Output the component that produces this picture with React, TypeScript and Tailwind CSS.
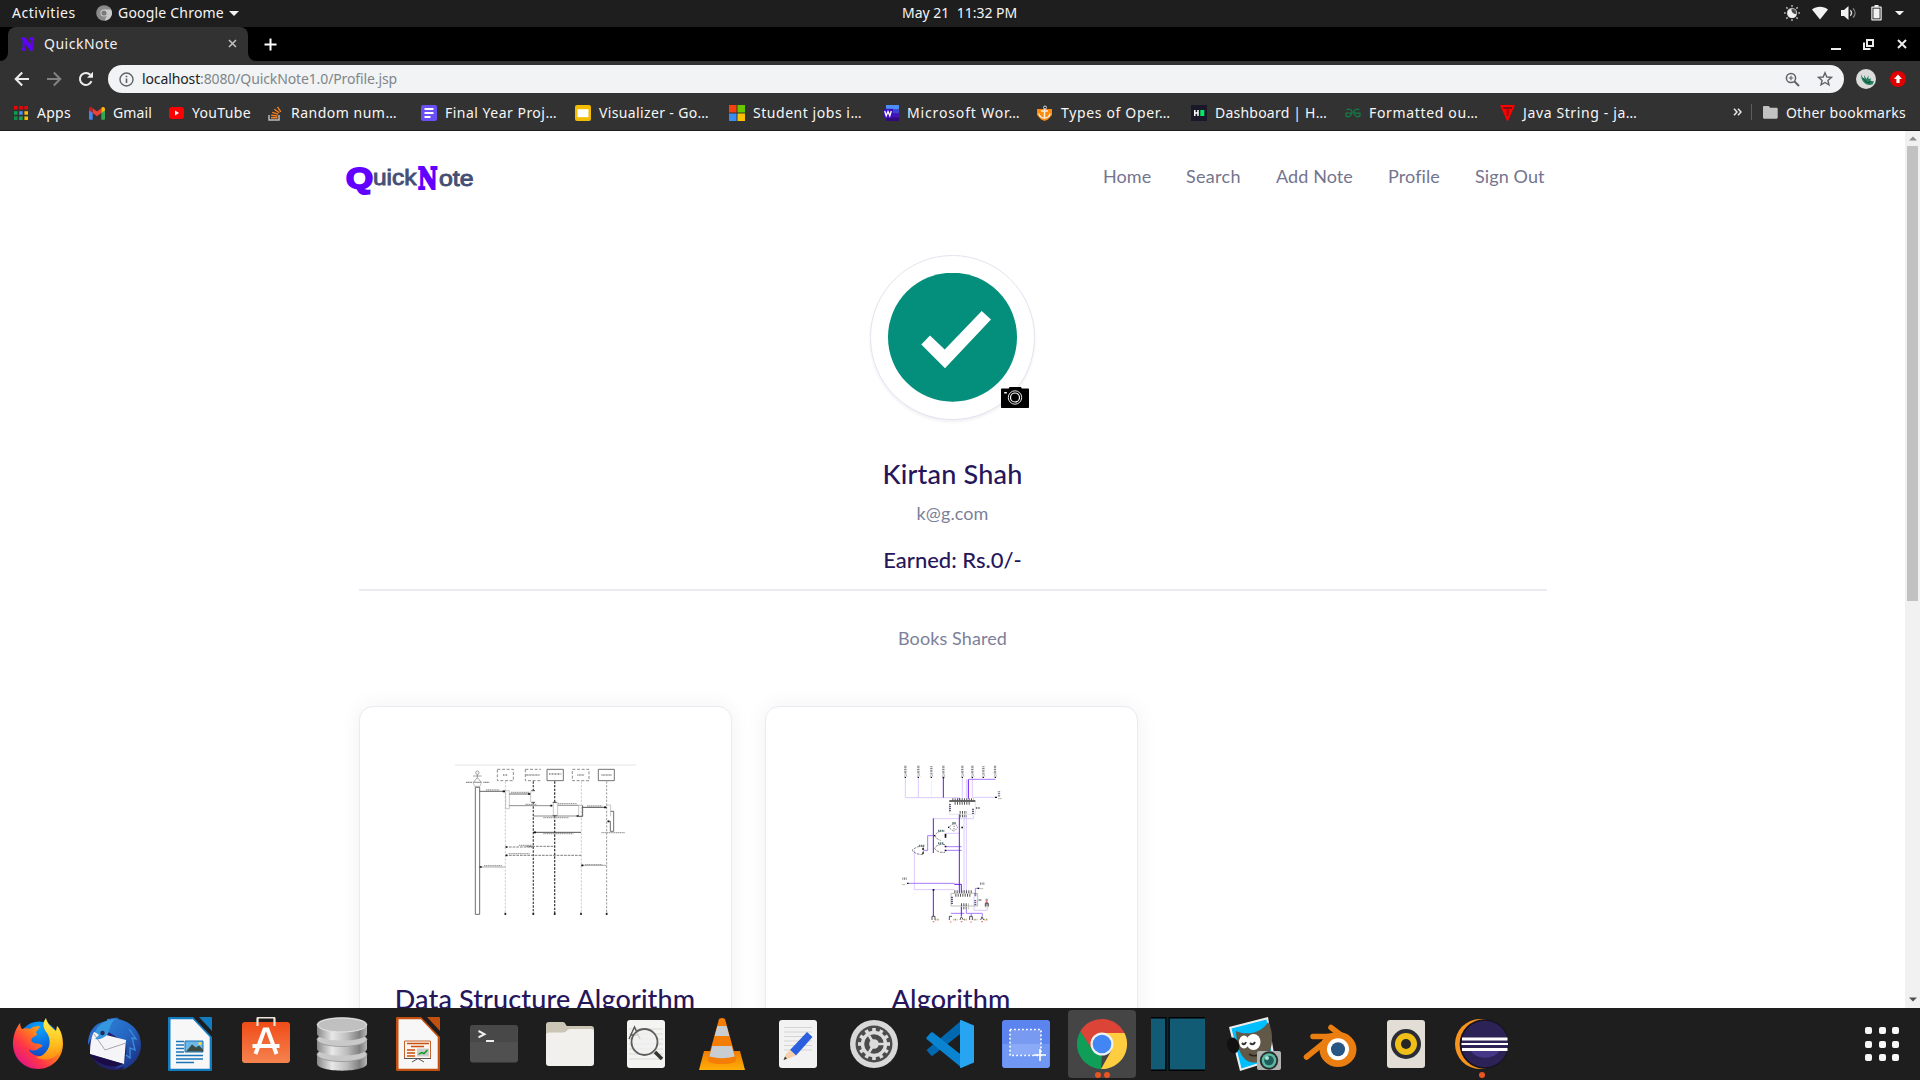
import React from 'react';

/* ---------- small icons ---------- */

const ChromeGrey = () => (
  <svg width="16" height="16" viewBox="0 0 16 16">
    <circle cx="8" cy="8" r="7.8" fill="#8b8b8b" />
    <path d="M8 .2A7.8 7.8 0 0 1 8.6 15.8L11.6 9 8 4.5h7A7.8 7.8 0 0 0 8 .2Z" fill="#c9c9c9" />
    <circle cx="8" cy="8" r="3.6" fill="#d0d0d0" />
    <circle cx="8" cy="8" r="2.6" fill="#7a7a7a" />
  </svg>
);

const Caret = ({ w = 10 }: { w?: number }) => (
  <svg width={w} height={w / 2} viewBox="0 0 10 5">
    <path d="M0 0h10L5 5z" fill="#f2f2f2" />
  </svg>
);

const NightLight = () => (
  <svg width="16" height="16" viewBox="0 0 16 16">
    <circle cx="8" cy="8" r="4.6" fill="#4a4a4a" stroke="#b0b0b0" strokeWidth="1.2" />
    <path d="M7.500 3.800a4.500 4.500 0 1 0 5 5.400A4.500 4.500 0 0 1 7.500 3.800Z" fill="#f2f2f2" />
    <g stroke="#b4b4b4" strokeWidth="1.600">
      <path d="M8 0v1.700M8 14.300V16M0 8h1.700M14.300 8H16M2.300 2.300l1.300 1.300M12.400 12.400l1.300 1.300M2.300 13.700l1.300-1.300M12.400 3.600l1.300-1.300" />
    </g>
  </svg>
);

const Wifi = () => (
  <svg width="16" height="14" viewBox="0 0 16 14">
    <path d="M0 3.6C4.5-.2 11.5-.2 16 3.6L8 13.5z" fill="#f2f2f2" />
  </svg>
);

const Volume = () => (
  <svg width="16" height="14" viewBox="0 0 16 14">
    <path d="M0 4h3l4.5-4v14L3 10H0z" fill="#f2f2f2" />
    <path d="M9.3 4.3c1.5 1.6 1.5 3.8 0 5.4" fill="none" stroke="#d8d8d8" strokeWidth="1.4" />
    <path d="M12 2.4c2.7 2.7 2.7 6.5 0 9.2" fill="none" stroke="#8a8a8a" strokeWidth="1.3" />
  </svg>
);

const Battery = () => (
  <svg width="11" height="16" viewBox="0 0 11 16">
    <path d="M3.5 0h4v1.5H10a.7.7 0 0 1 .7.7v12.6a.7.7 0 0 1-.7.7H1a.7.7 0 0 1-.7-.7V2.2a.7.7 0 0 1 .7-.7h2.5z" fill="#f2f2f2" />
    <path d="M1.5 2.7h8v11.6h-8z" fill="#1e1e1e" />
    <path d="M2.4 3.6h6.2v9.8H2.4z" fill="#f2f2f2" />
  </svg>
);

/* ---------- GNOME top bar ---------- */

const TopBar = () => (
  <div className="flex h-[27px] shrink-0 items-center bg-[#1e1e1e] pb-px text-[14px] leading-none text-[#f5f5f5]">
    <div className="flex w-[902px] items-center pl-3">
      <span className="w-[84px] tracking-[0.55px]">Activities</span>
      <ChromeGrey />
      <span className="ml-1.5 w-[111px] tracking-[0.2px]">Google Chrome</span>
      <Caret />
    </div>
    <span className="whitespace-pre">May 21  11:32 PM</span>
    <div className="ml-auto flex items-center pr-4">
      <NightLight />
      <span className="ml-3"><Wifi /></span>
      <span className="ml-[13px]"><Volume /></span>
      <span className="ml-[14px]"><Battery /></span>
      <span className="ml-[13px]"><Caret w={9} /></span>
    </div>
  </div>
);

/* ---------- Chrome window ---------- */

const TabStrip = () => (
  <div className="flex h-[34px] shrink-0 items-end bg-black text-[14px] text-[#f1f1f1]">
    <svg width="8" height="34" viewBox="0 0 8 34"><path d="M8 26v8H0a8 8 0 0 0 8-8Z" fill="#323232" /></svg>
    <div className="flex h-[34px] w-[240px] items-center rounded-t-[8px] bg-[#323232] pr-[11px] pb-px pl-[13px]">
      <svg width="14" height="14" viewBox="0 0 14 14">
        <text x="0.500" y="13" textLength="13" lengthAdjust="spacingAndGlyphs" fontSize="16" fill="#6200ff" stroke="#6200ff" strokeWidth="0.900" className='font-["DejaVu_Serif",serif] font-bold'>N</text>
      </svg>
      <span className="ml-[9px] tracking-[0.5px]">QuickNote</span>
      <svg className="ml-auto" width="9" height="9" viewBox="0 0 9 9"><path d="m1 1 7 7M8 1 1 8" stroke="#c4c4c4" strokeWidth="1.5" /></svg>
    </div>
    <svg width="8" height="34" viewBox="0 0 8 34"><path d="M0 26v8h8a8 8 0 0 1-8-8Z" fill="#323232" /></svg>
    <div className="flex h-[34px] flex-1 items-center pl-2">
      <svg width="13" height="13" viewBox="0 0 13 13"><path d="M6.500 .5v12M.5 6.500h12" stroke="#fff" strokeWidth="2" /></svg>
      <div className="ml-auto flex items-center pr-[13px]">
        <svg className="mt-1.5" width="10" height="10" viewBox="0 0 10 10"><path d="M0 7h10" stroke="#ececec" strokeWidth="2" /></svg>
        <svg className="ml-[22px]" width="11" height="11" viewBox="0 0 11 11">
          <path d="M4 1h6v6H4zM1 3.500V10h6.500" fill="none" stroke="#ececec" strokeWidth="2" />
        </svg>
        <svg className="ml-[23px]" width="10" height="10" viewBox="0 0 10 10"><path d="m1 1 8 8M9 1 1 9" stroke="#ececec" strokeWidth="2" /></svg>
      </div>
    </div>
  </div>
);

const AddressBar = () => (
  <div className="flex h-9 shrink-0 items-center bg-[#323232] pl-[14px] text-[14px]">
    <svg width="16" height="16" viewBox="0 0 16 16"><path d="M15 8H2M8.200 1.500 1.700 8l6.500 6.500" fill="none" stroke="#ededed" strokeWidth="2" /></svg>
    <svg className="ml-4" width="16" height="16" viewBox="0 0 16 16"><path d="M1 8h13M7.800 1.500 14.300 8l-6.500 6.500" fill="none" stroke="#828282" strokeWidth="2" /></svg>
    <svg className="ml-4" width="16" height="16" viewBox="0 0 16 16">
      <path d="M13.500 10.200A6 6 0 1 1 12.300 3.800" fill="none" stroke="#ededed" strokeWidth="2" />
      <path d="M15 .8v6H9z" fill="#ededed" />
    </svg>
    <div className="ml-[14px] flex h-7 w-[1736px] items-center rounded-full bg-[#f1f3f4] pr-[11px] pl-[11px]">
      <svg width="15" height="15" viewBox="0 0 15 15">
        <circle cx="7.500" cy="7.500" r="6.500" fill="none" stroke="#5f6368" strokeWidth="1.400" />
        <path d="M7.500 6.500V11M7.500 3.800v1.500" stroke="#5f6368" strokeWidth="1.600" />
      </svg>
      <span className="ml-2 pb-0.5 tracking-[-0.12px] text-[#80868b]"><span className="text-[#202124]">localhost</span>:8080/QuickNote1.0/Profile.jsp</span>
      <svg className="ml-auto" width="15" height="15" viewBox="0 0 15 15" fill="none" stroke="#5f6368">
        <circle cx="6" cy="6" r="4.600" strokeWidth="1.500" />
        <path d="m9.500 9.500 4.500 4.500" strokeWidth="1.900" />
        <path d="M6 3.800v4.400M3.800 6h4.400" strokeWidth="1.100" />
      </svg>
      <svg className="ml-[17px]" width="16" height="16" viewBox="0 0 16 16">
        <path d="m8 1.800 1.800 4.200 4.600.4-3.500 3 1.100 4.500L8 11.500l-4 2.400 1.100-4.500-3.500-3 4.600-.4z" fill="none" stroke="#5f6368" strokeWidth="1.400" />
      </svg>
    </div>
    <svg className="ml-3" width="20" height="20" viewBox="0 0 20 20">
      <circle cx="10" cy="10" r="10" fill="#dcdcdc" />
      <path d="M5 5c1 3 2 4 3.500 5L8 6l2.500 4 2-3.500V10l3-.5-1.500 2 4 1-1.500 3c-3 1-6 .5-8-1.500C6 12 5 9 5 5Z" fill="#27815f" />
      <path d="m7 9 3 4 4 1M12 14l3-2" stroke="#10523a" strokeWidth="1" fill="none" />
    </svg>
    <svg className="ml-[14px]" width="16" height="16" viewBox="0 0 16 16">
      <circle cx="8" cy="8" r="8" fill="#e00000" />
      <path d="M8 3.500 12 8H9.600v4H6.400V8H4z" fill="#fff" />
    </svg>
  </div>
);

const bookmarkIcons: Record<string, React.ReactNode> = {
  apps: (
    <svg width="14" height="14" viewBox="0 0 14 14">
      <path d="M0 0h3.500v3.500H0zM5.200 0h3.500v3.500H5.200zM10.400 0H14v3.500h-3.600z" fill="#f00000" />
      <path d="M0 5.200h3.500v3.500H0z" fill="#00a651" /><path d="M5.200 5.200h3.500v3.500H5.200z" fill="#4d8df6" /><path d="M10.400 5.200H14v3.500h-3.600z" fill="#fbbc05" />
      <path d="M0 10.400h3.500V14H0z" fill="#0a8f4a" /><path d="M5.200 10.400h3.500V14H5.200z" fill="#18a35b" /><path d="M10.400 10.400H14V14h-3.600z" fill="#fbbc05" />
    </svg>
  ),
  gmail: (
    <svg width="16" height="13" viewBox="0 0 16 13">
      <path d="M0 2v9.800c0 .6.500 1 1 1h2.700V5z" fill="#4285f4" />
      <path d="M16 2v9.800c0 .6-.5 1-1 1h-2.700V5z" fill="#34a853" />
      <path d="M12.300 1.500V6L16 3.200V2c0-1.700-1.900-2.500-3.200-1.500z" fill="#fbbc04" />
      <path d="M3.700 6V1.200L8 4.500l4.300-3.300V6L8 9.200z" fill="#ea4335" />
      <path d="M0 2v1.200L3.700 6V1.200L3.200.5C1.900-.5 0 .3 0 2z" fill="#c5221f" />
    </svg>
  ),
  youtube: (
    <svg width="16" height="12" viewBox="0 0 16 12"><rect width="15" height="12" rx="3" fill="#f00" /><path d="M6 3.500v5L10 6z" fill="#fff" /></svg>
  ),
  stack: (
    <svg width="15" height="16" viewBox="0 0 15 16" fill="none">
      <path d="M1 10v5h10v-5" stroke="#bcbbbb" strokeWidth="1.500" />
      <path d="M3 12.700h6.500M3.200 10.300l6.300.7M4.200 7.400l6 1.700M6.300 4.200l5 3.500M9.500 1.800l3.300 5" stroke="#f48024" strokeWidth="1.400" />
    </svg>
  ),
  doc: (
    <svg width="16" height="16" viewBox="0 0 16 16"><rect width="16" height="16" rx="2" fill="#6a4ff5" /><path d="M3.500 4h9M3.500 8h9M3.500 12h6" stroke="#fff" strokeWidth="1.800" /></svg>
  ),
  slides: (
    <svg width="16" height="16" viewBox="0 0 16 16"><rect width="16" height="16" rx="2" fill="#f2bd00" /><path d="M2.500 4.200h11v8h-11z" fill="#fff" /></svg>
  ),
  ms: (
    <svg width="16" height="16" viewBox="0 0 16 16"><path d="M0 0h7.500v7.500H0z" fill="#f8410c" /><path d="M8.500 0H16v7.500H8.500z" fill="#67c800" /><path d="M0 8.500h7.500V16H0z" fill="#3b8df0" /><path d="M8.500 8.500H16V16H8.500z" fill="#fcc200" /></svg>
  ),
  word: (
    <svg width="16" height="16" viewBox="0 0 16 16">
      <path d="M3 0h13v4.500H3z" fill="#4e8df5" /><path d="M3 4.500h13v4H3z" fill="#3f44d6" /><path d="M3 8.500h13v4H3z" fill="#4411bd" /><path d="M3 12.500h13V16H3z" fill="#310a80" />
      <path d="M0 3.800h10v9H0z" fill="#3b0fc0" /><path d="m1.700 6 1.500 4.800L5 6.500l1.800 4.300L8.300 6" fill="none" stroke="#fff" strokeWidth="1.300" />
    </svg>
  ),
  anchor: (
    <svg width="17" height="16" viewBox="0 0 17 16">
      <path d="M1 4h15v6l-4 4.500L8.500 16 5 14.500 1 10z" fill="#f98b0e" />
      <path d="M8.500 4v9M5 6h7M3 8.500c.5 3 3 4.500 5.500 4.500s5-1.500 5.500-4.500" fill="none" stroke="#f5eee4" strokeWidth="1.500" />
      <circle cx="9" cy="2.500" r="1.500" fill="none" stroke="#ddd" />
    </svg>
  ),
  hacker: (
    <svg width="16" height="16" viewBox="0 0 16 16"><path d="M0 0h16v16H0z" fill="#181828" /><path d="M3.800 5v6M7 5v6M3.800 8H7" stroke="#fff" strokeWidth="1.500" /><path d="M9.300 5h4v6h-4z" fill="#00ea64" /></svg>
  ),
  gfg: (
    <svg width="16" height="10" viewBox="0 0 16 10" fill="none" stroke="#157a45" strokeWidth="1.300">
      <path d="M1.500 1.800C5 0 7.500 2.500 7 5c-.5 3.500-4 4.800-6 2.800V5.200h6M14.500 1.800C11 0 8.500 2.500 9 5c.5 3.500 4 4.800 6 2.800V5.200H9" />
    </svg>
  ),
  java: (
    <svg width="16" height="16" viewBox="0 0 16 16"><path d="M1 0h15L9 16H8z" fill="#f00" /><path d="M4 3h9M8.600 3v8" stroke="#7a1010" strokeWidth="1.800" /></svg>
  ),
};

const bookmarks = [
  { icon: 'apps', label: 'Apps', box: 'w-[75px] gap-[9px] tracking-[0.28px]' },
  { icon: 'gmail', label: 'Gmail', box: 'w-[80px] gap-2 tracking-[0.13px]' },
  { icon: 'youtube', label: 'YouTube', box: 'w-[99px] gap-[7px] tracking-[0.34px]' },
  { icon: 'stack', label: 'Random num…', box: 'w-[153px] gap-2 tracking-[0.5px]' },
  { icon: 'doc', label: 'Final Year Proj…', box: 'w-[154px] gap-2 tracking-[0.49px]' },
  { icon: 'slides', label: 'Visualizer - Go…', box: 'w-[154px] gap-2 tracking-[0.36px]' },
  { icon: 'ms', label: 'Student jobs i…', box: 'w-[154px] gap-2 tracking-[0.54px]' },
  { icon: 'word', label: 'Microsoft Wor…', box: 'w-[153px] gap-2 tracking-[0.85px]' },
  { icon: 'anchor', label: 'Types of Oper…', box: 'w-[155px] gap-2 tracking-[0.66px]' },
  { icon: 'hacker', label: 'Dashboard | H…', box: 'w-[154px] gap-2 tracking-[0.22px]' },
  { icon: 'gfg', label: 'Formatted ou…', box: 'w-[154px] gap-2 tracking-[0.66px]' },
  { icon: 'java', label: 'Java String - ja…', box: 'w-[200px] gap-2 tracking-[0.62px]' },
];

const BookmarksBar = () => (
  <div className="flex h-[34px] shrink-0 items-start border-b border-[#1f1a20] bg-[#323232] pt-1 pr-[14px] pl-[14px] text-[14px] text-[#f6f6f6]">
    {bookmarks.map((b) => (
      <div key={b.label} className={`flex h-[22px] shrink-0 items-center whitespace-nowrap ${b.box}`}>
        <span className="pt-0.5">{bookmarkIcons[b.icon]}</span>
        <span>{b.label}</span>
      </div>
    ))}
    <div className="ml-auto flex h-[22px] items-center">
      <svg width="9" height="8" viewBox="0 0 9 8"><path d="m1 .8 3 3.200-3 3.200M5 .8l3 3.200-3 3.200" fill="none" stroke="#eee" strokeWidth="1.400" /></svg>
      <span className="ml-[9px] h-4 w-px bg-[#5c5c5c]" />
      <svg className="ml-[11px]" width="15" height="13" viewBox="0 0 15 13"><path d="M1.200 0h4.500l1.500 1.800h6.300c.7 0 1.200.5 1.200 1.200v8.500c0 .7-.5 1.200-1.200 1.200H1.200C.5 12.700 0 12.200 0 11.500V1.200C0 .5.5 0 1.200 0Z" fill="#c2c2c2" /></svg>
      <span className="ml-2 tracking-[0.28px]">Other bookmarks</span>
    </div>
  </div>
);

/* ---------- QuickNote page ---------- */

const Logo = () => (
  <svg width="132" height="38" viewBox="0 -2 132 38">
    <text x="1" y="28.500" textLength="27" lengthAdjust="spacingAndGlyphs" fontSize="30" fill="#6200ff" stroke="#6200ff" strokeWidth="2" className='font-["Liberation_Sans",sans-serif] font-bold'>Q</text>
    <g fill="#454f75" stroke="#454f75" strokeWidth="0.900" className='font-["Liberation_Sans",sans-serif]' fontSize="22">
      <text x="28" y="25.500" textLength="43.500" lengthAdjust="spacingAndGlyphs">uick</text>
      <text x="94" y="26.500" textLength="34.500" lengthAdjust="spacingAndGlyphs">ote</text>
    </g>
    <text x="73" y="29.500" textLength="19.500" lengthAdjust="spacingAndGlyphs" fontSize="30.500" fill="#6200ff" stroke="#6200ff" strokeWidth="2.200" className='font-["DejaVu_Serif",serif] font-bold'>N</text>
  </svg>
);

const nav = [
  { label: 'Home', cls: 'w-[83px]' },
  { label: 'Search', cls: 'w-[90px] tracking-[0.3px]' },
  { label: 'Add Note', cls: 'w-28' },
  { label: 'Profile', cls: 'w-[87px]' },
  { label: 'Sign Out', cls: '' },
];

const Avatar = () => (
  <div className="relative mt-[34px] flex h-[165px] w-[165px] shrink-0 items-center justify-center rounded-full border border-[#e4e4f0] bg-white shadow-[0_2px_3px_rgba(60,50,120,0.08)]">
    <svg width="130" height="130" viewBox="0 0 130 130">
      <circle cx="64.500" cy="64.200" r="64.500" fill="#038f7c" />
      <path d="m33.300 71.500 8.700-9 14.700 14 37-38.600 9.300 8.600-46 48.700z" fill="#fff" />
    </svg>
    <svg className="absolute top-[131px] left-[130px]" width="28" height="21" viewBox="0 0 28 21">
      <path d="M8.500 0h11.500l.8 1.500H27c.6 0 1 .4 1 1V20c0 .6-.4 1-1 1H1c-.6 0-1-.4-1-1V2.500c0-.6.4-1 1-1h6.700z" fill="#000" />
      <circle cx="14" cy="10.500" r="6.700" fill="none" stroke="#fff" strokeWidth="0.900" />
      <circle cx="14" cy="10.500" r="4.500" fill="none" stroke="#fff" strokeWidth="1.200" />
      <path d="M3.200 5h2.600v1.500H3.200z" fill="#fff" />
    </svg>
  </div>
);

const SequenceDiagram = () => (
  <svg width="220" height="185" viewBox="0 0 660 555" fill="none" stroke="#4a4a4a" strokeWidth="2.500">
    <path d="M45 45h543" stroke="#ececec" strokeWidth="5" />
    <g stroke="#666" strokeWidth="1.800">
      <circle cx="112" cy="68" r="5" /><path d="M112 73v10M99 78h26M112 83l-12 14h24z" />
      <path d="M78 97h18M130 97h18" strokeWidth="4" stroke="#888" strokeDasharray="4 1" /><path d="M99 97h26l-5 12h-16z" stroke="#999" />
      <path d="M106 112h13v381h-13z" strokeWidth="2.300" stroke="#444" />
    </g>
    <g>
      <path d="M172 58h48v34h-48zM256 58h47M256 58v34h47M397 58h50v34h-50z" strokeDasharray="9 5" stroke="#777" />
      <path d="M321 58h49v34h-49zM475 58h48v34h-48z" stroke="#555" />
    </g>
    <g stroke="#888" strokeWidth="5" strokeDasharray="3 1.500">
      <path d="M189 75h14M257 75h42M327 72h37M412 75h20M484 75h32" />
    </g>
    <g strokeDasharray="7 4">
      <path d="M196 94v398M424 94v398" stroke="#b5b5b5" strokeWidth="2" />
      <path d="M500 94v398" stroke="#888" />
      <path d="M280 94v28M280 158v336" strokeWidth="4" stroke="#555" /><path d="M344 94v62M344 198v296" strokeWidth="4" stroke="#444" />
    </g>
    <path d="M196 488v7M280 488v7M344 488v7M423 488v7M500 488v7" strokeWidth="5" stroke="#222" />
    <path d="M197 122h11v54h-11zM272 124v32M340 158h13v38h-13zM416 166h11v34h-11zM500 165h12v34" stroke="#a5a5a5" strokeWidth="1.800" />
    <path d="M428 166v33h-12M512 184h9v60h-10v-30h-9" stroke="#444" strokeWidth="2.300" />
    <path d="M274 122h11M274 157h11M338 157h12M338 197h12" strokeWidth="3" />
    <path d="M119 124h76M208 132h62" />
    <path d="M208 167h128M353 166h63M280 198h136" stroke="#777" />
    <path d="M428 172h71M280 247h143" stroke="#333" />
    <path d="M196 291h84l-20-2h83M196 316h228" strokeDasharray="8 3" stroke="#666" />
    <path d="M119 351h77M423 346h77" stroke="#999" />
    <path d="M188 124h7M264 132h7M331 167h6M410 198h6M492 172h7M281 247h7M197 291h5M197 316h5M119 351h6M424 346h6M503 214h5" stroke="#111" strokeWidth="5" />
    <g stroke="#a0a0a0" strokeWidth="4" strokeDasharray="4 1.500">
      <path d="M138 120h40M213 127h56M256 163h34M354 161h57M310 203h76M441 168h46M310 251h90M237 286h40M206 311h63M132 347h54M435 344h52M484 248h71" />
    </g>
  </svg>
);

const CircuitDiagram = () => (
  <svg width="160" height="185" viewBox="0 0 480 555" fill="none" strokeWidth="3">
    <g stroke="#dccbff">
      <path d="M106 84v59h163M145 84v59M277 84v62M307 84v58h70M289 88v58M190 206h120v-10M282 196v232M289 196v232M133 300v119h120M228 250h40M312 440v41h40v-8" />
      <path d="M184 88v52" stroke="#f0f0f0" />
    </g>
    <g stroke="#a77bff">
      <path d="M376 88h-80M194 257h-21v44h-13M226 290h49M226 301h49M116 400h138M316 430v-15h10M243 490h40M289 478v12h48v8M304 490v8" />
    </g>
    <g stroke="#6a12f5">
      <path d="M220 82v61M295 88v58M268 144v6M268 192v235M190 205v104M190 420v78M253 403h21v25M274 470v28" />
    </g>
    <g stroke="#85808a" strokeWidth="7" strokeDasharray="3 2">
      <path d="M106 47v24M145 47v24M184 49v22M220 47v24M277 47v24M307 47v24M340 49v22M375 47v24M387 124v16M97 386h14M330 401h14M350 446v26" />
    </g>
    <g stroke="#999" strokeWidth="2">
      <path d="M103 80l4-10 4 10M142 80l4-10 4 10M181 80l4-10 4 10M217 80l4-10 4 10M274 80l4-10 4 10M304 80l4-10 4 10M337 80l4-10 4 10M372 80l4-10 4 10M384 146h12M96 404h10M330 416h10" />
    </g>
    <g fill="#111">
      <path d="M104 80h4v4h-4zM143 80h4v4h-4zM182 80h4v4h-4zM218 80h5v5h-5zM275 80h4v4h-4zM305 80h4v4h-4zM338 80h4v4h-4zM374 80h4v4h-4zM375 140h6v4h-6zM111 398h5v4h-5zM323 413h5v4h-5zM188 417h5v5h-5z" />
    </g>
    <path d="M238 153h78v40h-78z" stroke="#d8d8d8" strokeWidth="2" /><path d="M238 153h78" stroke="#222" strokeWidth="4" />
    <path d="M243 430h80v38h-80z" stroke="#bbb" strokeWidth="3" />
    <g stroke="#555" strokeWidth="8" strokeDasharray="3 4">
      <path d="M247 149h64M254 160h46M269 187h22M269 198h22M253 425h52M256 436h46M273 464h22M273 474h22" />
    </g>
    <path d="M240 162v22M309 176v16M246 440v22M316 450v16M316 430v9" stroke="#665b88" strokeWidth="6" strokeDasharray="4 2" />
    <path d="M318 174h12M326 450h10" stroke="#777" strokeWidth="6" strokeDasharray="3 2" />
    <g stroke="#555" strokeWidth="2.200">
      <path d="M224 243c-14-2-26 6-30 14 4 8 10 12 18 14M225 284c-16-4-28 4-31 11 5 9 16 14 31 12M160 289c-16-2-26 5-34 12 8 8 18 14 34 12z" strokeDasharray="8 3" />
      <path d="M235 232l17-12v24zM255 220l8 12-8 10" strokeDasharray="4 3" />
    </g>
    <g fill="#111"><path d="M224 251h5v12h-5zM224 287h5v5h-5zM224 299h5v5h-5zM157 294h4v6h-4zM157 307h4v5h-4zM192 255h4v4h-4zM274 230h5v5h-5zM234 230h4v4h-4z" /></g>
    <path d="M204 242h16M204 280h16M147 287h16M247 219h12" stroke="#607b80" strokeWidth="6" strokeDasharray="4 2" />
    <g stroke="#333"><path d="M186 510v-11h9v11M238 510v-11h8M270 510l4-10 6 10M299 510v-11h8v11M332 510l4-10 5 10M346 470v-10h9v10" strokeWidth="2.500" /><path d="M195 509h12M250 509h12M282 509h10M311 509h11M343 509h11" stroke="#a99a6a" strokeWidth="5" strokeDasharray="3 2" /></g>
    <path d="M188 515h5M240 516h4M272 515h5M301 516h4M334 515h5M350 452v5" stroke="#ff5a5a" strokeWidth="3" />
  </svg>
);

const BookCard = ({ title, offset, children }: { title: string; offset: string; children: React.ReactNode }) => (
  <div className="h-[420px] w-[373px] shrink-0 rounded-[14px] border border-[#eaeaf3] bg-white shadow-[0_0_22px_rgba(40,40,70,0.06)]">
    <div className={`pt-[43px] ${offset}`}>{children}</div>
    <h3 className="mt-[44px] text-center text-[27px] leading-10 font-medium tracking-[0.12px] text-[#26165c]">{title}</h3>
  </div>
);

const Page = () => (
  <div className='flex min-h-0 flex-1 overflow-hidden bg-white font-["Lato",sans-serif]'>
    <main className="flex h-full flex-1 flex-col items-center overflow-hidden">
      <header className="flex h-[90px] w-full shrink-0 items-center pl-[345px]">
        <Logo />
        <nav className="ml-[626px] flex text-[18px] tracking-[0.1px] text-[#74748e]">
          {nav.map((n) => (
            <a key={n.label} className={`whitespace-nowrap ${n.cls}`}>{n.label}</a>
          ))}
        </nav>
      </header>
      <Avatar />
      <h1 className="mt-[34px] shrink-0 text-[27px] leading-10 font-medium tracking-[0.2px] text-[#26165c]">Kirtan Shah</h1>
      <p className="mt-[5px] text-[18px] leading-7 tracking-[0.1px] text-[#7c7f9b]">k@g.com</p>
      <h2 className="mt-[18px] text-[22px] leading-[30px] font-medium text-[#26165c]">Earned: Rs.0/-</h2>
      <div className="mt-[14px] h-0.5 w-[1188px] shrink-0 bg-[#eaeaf1]" />
      <p className="mt-[33px] text-[18px] leading-7 tracking-[0.1px] text-[#7c7f9b]">Books Shared</p>
      <section className="mt-[54px] flex w-[1188px] shrink-0 gap-[33px]">
        <BookCard title="Data Structure Algorithm" offset="pl-20"><SequenceDiagram /></BookCard>
        <BookCard title="Algorithm" offset="pl-[104px]"><CircuitDiagram /></BookCard>
      </section>
    </main>
    <div className="flex w-[15px] shrink-0 flex-col items-center bg-[#f1f1f1]">
      <svg className="my-[5px] shrink-0" width="8" height="5" viewBox="0 0 8 5"><path d="M0 4.500 4 .5l4 4z" fill="#8b8b8b" /></svg>
      <div className="h-[455px] w-[11px] bg-[#c1c1c1]" />
      <svg className="mt-auto mb-[6px]" width="8" height="5" viewBox="0 0 8 5"><path d="M0 .5h8l-4 4z" fill="#505050" /></svg>
    </div>
  </div>
);

/* ---------- dock ---------- */

const LibreSheet = ({ edge, children }: { edge: string; children: React.ReactNode }) => (
  <>
    <path d="M6 0h24l19 20v33a1 1 0 0 1-1 1H6a1 1 0 0 1-1-1V1a1 1 0 0 1 1-1Z" fill={edge} />
    <path d="M7.500 2.300H30L46.700 20v31.700H7.500z" fill="#f7f7f7" />
    <path d="M36 0h12a1 1 0 0 1 1 1v13z" fill={edge} />
    {children}
  </>
);

const spokes = [0, 30, 60, 90, 120, 150, 180, 210, 240, 270, 300, 330];

const dockIcons: { name: string; art: React.ReactNode }[] = [
  {
    name: 'Firefox',
    art: (
      <>
        <defs>
          <linearGradient id="ffBody" x1="1" y1="0" x2="0.150" y2="0.900"><stop offset="0" stopColor="#ffd93b" /><stop offset="0.450" stopColor="#ff8a16" /><stop offset="0.750" stopColor="#ff3647" /><stop offset="1" stopColor="#e31587" /></linearGradient>
          <linearGradient id="ffTail" x1="0" y1="0" x2="0" y2="1"><stop offset="0" stopColor="#fff14f" /><stop offset="0.600" stopColor="#ffc21e" /><stop offset="1" stopColor="#ff8a16" /></linearGradient>
          <radialGradient id="ffGlobe" cx="0.500" cy="0.150" r="0.900"><stop offset="0" stopColor="#0aa5ff" /><stop offset="0.600" stopColor="#0b5fd8" /><stop offset="1" stopColor="#2c2a92" /></radialGradient>
        </defs>
        <circle cx="28" cy="25" r="20.500" fill="url(#ffGlobe)" />
        <path d="M9 6C5 11 2 18 2 27c0 14 11 25 25 25s25-11 25-25c0-9-3-15-6-18 1 6-1 12-4 17-2 10-8 14-15 13-5-1-9-4-9-7 4 3 8 1 10-1 2-1 4-1 3-3-3-2-6-1-8-2-3-1-3-3-2-5l5-3-1-3c1-2 3-3 4-6-5 0-8 1-10 3-2-1-5-1-8 0-2-2-2-6-2-9Z" fill="url(#ffBody)" />
        <path d="M35 1c-4 5-3 10 1 15 4 6 4 15-3 21-2 2-5 3-8 3 10 6 22 1 25-9 2-9 1-16-4-22l-1 5c-5-4-9-8-10-13Z" fill="url(#ffTail)" />
      </>
    ),
  },
  {
    name: 'Thunderbird',
    art: (
      <>
        <defs>
          <linearGradient id="tbBody" x1="0" y1="0" x2="0.800" y2="1"><stop offset="0" stopColor="#2c7fd6" /><stop offset="0.500" stopColor="#2464bf" /><stop offset="1" stopColor="#1c2b7c" /></linearGradient>
        </defs>
        <circle cx="27" cy="28" r="25" fill="#23206b" />
        <path d="M20 2C34-1 54 8 54 28c0 12-8 21-19 25l3-4-11 3 10-6c2-6 3-13 2-20L20 14z" fill="url(#tbBody)" />
        <path d="M1 28C1 12 10 5 20 4c4-3 8-4 12-3-6 3-9 10-12 17L6 18z" fill="#2a6dcb" />
        <path d="M7 15 39 23l-2 24L3 37C3 28 4 20 7 15Z" fill="#f5f5f8" />
        <path d="m7 17 11 16 21-7" fill="none" stroke="#a6a6ad" />
        <path d="M8 15C12 6 20 2 29 2c-6 4-6 10-8 15-4 4-8 6-13 5l4-4z" fill="#3597dd" />
        <circle cx="15.500" cy="16" r="2.200" fill="#232a55" />
        <path d="M2 37c6 8 16 13 27 12L36 47z" fill="#1b0c45" />
        <path d="m42 12 7 10-4-1 3 12-5-2v10l-4-3" fill="none" stroke="#3e8dde" strokeWidth="1.300" />
      </>
    ),
  },
  {
    name: 'Writer',
    art: (
      <LibreSheet edge="#127cc1">
        <path d="M13 24.500h8M13 28h8M13 31.500h8M13 35h8M13 38.500h27M13 42h27M13 45.500h18" stroke="#1a75b8" strokeWidth="1.500" />
        <path d="M22 24h18v11H22z" fill="#6ab7e8" stroke="#1a75b8" />
        <path d="m23 34.500 6-7 4 3 3-2 4 4v2z" fill="#3c4c43" />
        <circle cx="37" cy="26.500" r="1.600" fill="#ffdf3a" />
      </LibreSheet>
    ),
  },
  {
    name: 'Software',
    art: (
      <>
        <defs><linearGradient id="swBag" x1="0" y1="0" x2="0" y2="1"><stop offset="0" stopColor="#f04b17" /><stop offset="1" stopColor="#f5834f" /></linearGradient></defs>
        <rect x="3" y="5" width="48" height="41" rx="3" fill="url(#swBag)" />
        <path d="M18.500 9V2q0-1.500 1.500-1.500h14q1.500 0 1.500 1.500v7" fill="none" stroke="#eee3d8" strokeWidth="2.200" />
        <path d="m16.500 37 9-24.500h3L37.500 37M13.500 29h27" fill="none" stroke="#fff" strokeWidth="4" />
      </>
    ),
  },
  {
    name: 'Database',
    art: (
      <>
        <defs><linearGradient id="dbSide"><stop offset="0" stopColor="#888" /><stop offset="0.300" stopColor="#e8e8e8" /><stop offset="0.600" stopColor="#bdbdbd" /><stop offset="0.850" stopColor="#808080" /><stop offset="1" stopColor="#b5b5b5" /></linearGradient></defs>
        {[36, 21, 6].map((y) => (
          <g key={y}>
            <path d={`M2 ${y + 1}v9.500c0 9.500 50 9.500 50 0V${y + 1}Z`} fill="url(#dbSide)" />
            <ellipse cx="27" cy={y + 1.500} rx="25" ry="7" fill="#c9c9c9" stroke="#8e8e8e" strokeWidth="0.700" />
          </g>
        ))}
        <ellipse cx="27" cy="8" rx="24.500" ry="7" fill="#c0c0c0" stroke="#e6e6e6" />
      </>
    ),
  },
  {
    name: 'Impress',
    art: (
      <LibreSheet edge="#c4500f">
        <path d="M13.500 24h26v17.500h-26z" fill="#fff5ee" stroke="#c4652f" />
        <path d="M16 26.500h22M20 29.500h13M16 33h8M16 36h8M16 39h8" stroke="#c4500f" strokeWidth="1.500" />
        <path d="M26 31.500h12v8H26z" fill="#ccc" /><path d="m27.500 37.500 3-2 2.500 1 3.500-3.500" stroke="#0a9a20" strokeWidth="1.500" fill="none" />
        <path d="m21 45 6-3.500 6 3.500M13 41.500h27" stroke="#555" fill="none" />
      </LibreSheet>
    ),
  },
  {
    name: 'Terminal',
    art: (
      <>
        <rect x="3" y="8" width="48" height="37.500" rx="3" fill="#505050" /><path d="M3.500 25V11a3 3 0 0 1 3-3h41a3 3 0 0 1 3 3v14z" fill="#484848" />
        <path d="m11.500 14 6 3.200-6 3.200M19 24h8" fill="none" stroke="#eee" strokeWidth="2" />
      </>
    ),
  },
  {
    name: 'Files',
    art: (
      <>
        <path d="M3 8a3 3 0 0 1 3-3h14q2 0 3 3l1 1h24a3 3 0 0 1 3 3v20H3z" fill="#cbc5b5" />
        <path d="M3 18q0-2.500 3-2.500h14q3 0 4-2 .6-1.500 3-1.500h21q3 0 3 3v31a3 3 0 0 1-3 3H6a3 3 0 0 1-3-3z" fill="#f2f0ec" />
      </>
    ),
  },
  {
    name: 'Document Viewer',
    art: (
      <>
        <rect x="8" y="3" width="38" height="48" rx="3" fill="#f4f4f2" />
        <path d="M10 12h34M10 17h34M10 22h34M10 27h34M10 32h34M10 37h34M10 42h34" stroke="#dadad0" />
        <path d="m10 22 5.500-12L21 22M12 18h7" stroke="#555" fill="none" strokeWidth="1.400" />
        <circle cx="25.500" cy="25" r="13" fill="#f0f0f0" fillOpacity="0.800" stroke="#5d5d5d" strokeWidth="1.800" />
        <path d="m36 35 7 7" stroke="#333" strokeWidth="3.600" />
      </>
    ),
  },
  {
    name: 'VLC',
    art: (
      <>
        <defs><linearGradient id="vlcBase" x1="0" y1="0" x2="0" y2="1"><stop offset="0" stopColor="#f07c00" /><stop offset="1" stopColor="#ffae08" /></linearGradient></defs>
        <path d="M9 34h36l5 19H4z" fill="url(#vlcBase)" />
        <path d="M24 2q3-2 6 0l11 40q1 5-14 5t-14-5z" fill="#f47d05" />
        <path d="M22.400 9h9.200l2.700 10H19.700zM17.300 29h19.400l3 10.500q-12.500 3.500-25.400 0z" fill="#c8cdd1" />
      </>
    ),
  },
  {
    name: 'Text Editor',
    art: (
      <>
        <rect x="8" y="3" width="38" height="48" rx="3" fill="#f2f2f2" />
        <path d="M13 10.500h28M13 15h28M13 19.500h28M13 24h28M13 28.500h28M13 33h28" stroke="#d4d4d4" />
        <path d="m36 15 5.500 5L25 38.500l-6-5.500z" fill="#2c5fdd" /><path d="m19 33 6 5.500-8 3-4.500 1.500L15 37z" fill="#f6cfaa" /><path d="m12.500 43 1.500-3.500 2 2.200z" fill="#333" />
      </>
    ),
  },
  {
    name: 'Settings',
    art: (
      <>
        <circle cx="27" cy="27" r="24" fill="#d8d8d8" /><circle cx="27" cy="27" r="18.500" fill="#4b4b4b" />
        <circle cx="27" cy="27" r="11.500" fill="none" stroke="#dcdcdc" strokeWidth="3.400" />
        {spokes.map((a) => (
          <path key={a} d="M27 11v4" stroke="#dcdcdc" strokeWidth="3.600" transform={`rotate(${a} 27 27)`} />
        ))}
        <circle cx="27" cy="27" r="4.800" fill="#dcdcdc" /><path d="M27 27h10M27 27l-5-8.500M27 27l-5 8.500" stroke="#dcdcdc" strokeWidth="2.500" />
      </>
    ),
  },
  {
    name: 'Visual Studio Code',
    art: (
      <>
        <path d="m3.500 33 4.500 5.500q1 .5 2 0L39 15.500V3L3.500 33Z" fill="#0068b0" />
        <path d="m3.500 20.500 4.500-5q1-.7 2 0L39 38.500V51L3.500 22z" fill="#0a83d0" />
        <path d="M38 3 51 8.500v37L38 51q-1 .4-1-1V4q0-1.400 1-1Z" fill="#27a5f1" />
      </>
    ),
  },
  {
    name: 'Screenshot',
    art: (
      <>
        <rect x="3" y="3" width="48" height="48" rx="3" fill="#5b84ee" /><path d="M3.500 27h47v21a3 3 0 0 1-3 3h-41a3 3 0 0 1-3-3z" fill="#7197f5" />
        <path d="M11 12.500h31v26H11z" fill="#fff" fillOpacity="0.180" stroke="#fff" strokeWidth="1.700" strokeDasharray="1.800 2.200" />
        <path d="M41 32v12M35 38h12" stroke="#fff" strokeWidth="1.600" />
      </>
    ),
  },
  {
    name: 'Google Chrome',
    art: (
      <>
        <path d="M5.300 14.500A25 25 0 0 1 49.500 16H27L16.500 32z" fill="#db4437" />
        <path d="M5.300 14.500 17.500 33 27 38l-1 14A25 25 0 0 1 5.300 14.500Z" fill="#0f9d58" />
        <path d="M49.500 16A25 25 0 0 1 26 52l11-19.500L36 21l-9-5z" fill="#ffcd40" />
        <circle cx="27" cy="27" r="11.500" fill="#f1f1f1" /><circle cx="27" cy="27" r="9.300" fill="#4285f4" />
      </>
    ),
  },
  {
    name: 'Panels',
    art: (
      <>
        <path d="M0 0h54v54H0z" fill="#115b75" /><path d="M0 .7h15v52.600H0M54 .7H18v52.600h36" fill="none" stroke="#000" strokeWidth="1.600" /><path d="M16.500 0v54" stroke="#1e1e1e" strokeWidth="1.600" />
      </>
    ),
  },
  {
    name: 'Shutter',
    art: (
      <>
        <path d="m2 10 39-10 7 43-35 11z" fill="#eee" /><path d="m4.500 11.500 35-9 6 39-31 10z" fill="#00bfff" />
        <path d="M9 14c10 5 26 2 32-9 5 8 5 21 2 29-4 10-11 13-20 11-6-2-13-9-14-31Z" fill="#625848" />
        <ellipse cx="17" cy="25" rx="5" ry="6.500" fill="#fff" /><ellipse cx="26.500" cy="25" rx="7" ry="8" fill="#fff" />
        <path d="M15 26q2.500 3 4-1M23 26q3 3 5-1" stroke="#333" strokeWidth="2" fill="none" />
        <path d="M22 37q4 3 9 1" stroke="#2b241e" strokeWidth="1.600" fill="none" />
        <ellipse cx="6" cy="28.500" rx="6" ry="8" fill="#111" transform="rotate(-15 6 28)" />
        <rect x="30" y="34" width="24" height="19" rx="2" fill="#b0b2b1" />
        <circle cx="42" cy="43.500" r="9.200" fill="#252d2b" /><circle cx="42" cy="43.500" r="7.300" fill="#5cb8a0" /><circle cx="42" cy="43.500" r="4.800" fill="#1f5c5b" /><circle cx="40" cy="41" r="2" fill="#a7e5d2" />
      </>
    ),
  },
  {
    name: 'Blender',
    art: (
      <>
        <path d="M10 19.500h20M3.500 40 27 21M28 10.500l17 13" stroke="#ea7e10" strokeWidth="5.500" strokeLinecap="round" />
        <ellipse cx="35" cy="32.500" rx="18.500" ry="17.500" fill="#ea7e10" /><path d="M23 17 36 15.500l-14 16z" fill="#ea7e10" />
        <circle cx="35" cy="32.300" r="11" fill="#fff" /><circle cx="35" cy="32.300" r="7" fill="#275684" />
      </>
    ),
  },
  {
    name: 'Rhythmbox',
    art: (
      <>
        <rect x="8" y="3" width="38" height="48" rx="3" fill="#e3ded5" /><circle cx="27" cy="27" r="15" fill="#2a2d35" /><circle cx="27" cy="27" r="11" fill="#f0c019" /><circle cx="27" cy="27" r="5" fill="#262626" />
      </>
    ),
  },
  {
    name: 'Eclipse',
    art: (
      <>
        <circle cx="25" cy="27" r="25" fill="#f7941e" /><circle cx="29.300" cy="27" r="24.700" fill="#17131f" /><circle cx="29.800" cy="27" r="23.300" fill="#2c2255" />
        <path d="M15 33h30a16 12 0 0 1-30 0Z" fill="#473788" /><path d="M7 20.500h45.500v3H7zM6.500 26h46.500v2H6.500zM7 31h45.500v3H7z" fill="#fff" />
      </>
    ),
  },
];

const running: Record<string, number> = { 'Google Chrome': 2, Eclipse: 1 };

const Dock = () => (
  <div className="flex h-[72px] shrink-0 items-center bg-[#1e1e1e]">
    {dockIcons.map((d) => (
      <div key={d.name} className="flex w-[76px] shrink-0 justify-center">
        <div className={`relative flex h-[68px] w-[68px] items-center justify-center rounded-[4px] ${d.name === 'Google Chrome' ? 'bg-[#454545]' : ''}`}>
          <svg width="54" height="54" viewBox="0 0 54 54" fill="none">{d.art}</svg>
          <div className="absolute bottom-0 flex gap-[3px]">
            {Array.from({ length: running[d.name] ?? 0 }, (_, i) => (
              <span key={i} className="h-1.5 w-1.5 rounded-full bg-[#e95420]" />
            ))}
          </div>
        </div>
      </div>
    ))}
    <div className="mr-[21px] ml-auto grid grid-cols-3 gap-[6.500px]">
      {[0, 1, 2, 3, 4, 5, 6, 7, 8].map((i) => (
        <span key={i} className="h-[7px] w-[7px] rounded-[2px] bg-[#f7f7f7]" />
      ))}
    </div>
  </div>
);

export default function App() {
  return (
    <div className='flex h-[1080px] w-[1920px] flex-col overflow-hidden bg-[#1e1e1e] font-["Noto_Sans",sans-serif]'>
      <TopBar />
      <TabStrip />
      <AddressBar />
      <BookmarksBar />
      <Page />
      <Dock />
    </div>
  );
}
